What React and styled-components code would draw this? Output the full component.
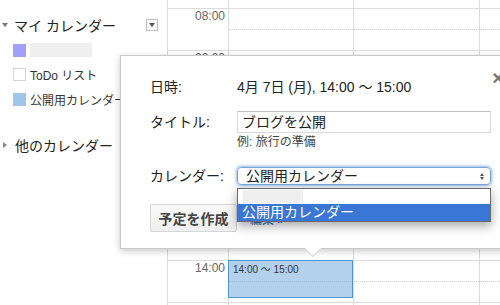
import styled, { createGlobalStyle } from "styled-components";

const GlobalStyle = createGlobalStyle`
  * { box-sizing: border-box; }
  html, body { margin: 0; padding: 0; background: #fff; overflow: hidden; }
  body {
    font-family: Arial, "Liberation Sans", "Noto Sans CJK JP", sans-serif;
    color: #222;
  }
`;

const Page = styled.div`
  position: relative;
  display: flex;
  width: 500px;
  height: 305px;
  overflow: hidden;
`;

/* ---------- sidebar ---------- */

const Sidebar = styled.aside`
  width: 167px;
  flex-shrink: 0;
  padding: 14px 9px 0 2px;
`;

const SectionHead = styled.div`
  display: flex;
  align-items: center;
  height: 22px;
  margin-top: ${(p) => p.$gap || 0}px;
  font-size: 14px;
  color: #222;
`;

const Caret = styled.span`
  width: 0;
  height: 0;
  ${(p) =>
    p.$open
      ? `border-left: 3px solid transparent;
         border-right: 3px solid transparent;
         border-top: 4px solid #777;
         margin-right: 6px;`
      : `border-top: 3px solid transparent;
         border-bottom: 3px solid transparent;
         border-left: 4px solid #888;
         margin: 0 8px 0 1px;`}
`;

const MenuButton = styled.span`
  margin-left: auto;
  width: 12px;
  height: 12px;
  border: 1px solid #bdbdbd;
  background: #fafafa;
  display: flex;
  align-items: center;
  justify-content: center;

  &::after {
    content: "";
    border-left: 3px solid transparent;
    border-right: 3px solid transparent;
    border-top: 4px solid #555;
  }
`;

const CalList = styled.ul`
  list-style: none;
  margin: 2px 0 0;
  padding: 0;
`;

const CalItem = styled.li`
  display: flex;
  align-items: center;
  height: 24.5px;
  padding-left: 11px;
  font-size: 12px;
  color: #333;
  white-space: nowrap;
`;

const Swatch = styled.span`
  width: 13px;
  height: 13px;
  margin-right: 4px;
  flex-shrink: 0;
  background: ${(p) => p.$color};
  border: ${(p) => (p.$outline ? "1px solid #d4d4d4" : "none")};
`;

const Hidden = styled.span`
  width: 62px;
  height: 14px;
  background: #efefef;
`;

/* ---------- week grid ---------- */

const Grid = styled.div`
  flex: 1;
  display: flex;
`;

const Column = styled.div`
  flex: ${(p) => (p.$w ? `0 0 ${p.$w}px` : "1")};
  border-left: 1px solid #dcdcdc;
`;

const Slot = styled.div`
  position: relative;
  height: ${(p) => (p.$partial ? 8 : 42)}px;
  border-top: ${(p) => (p.$partial ? "none" : "1px solid #dcdcdc")};

  ${(p) =>
    p.$half &&
    !p.$partial &&
    `&::after {
      content: "";
      position: absolute;
      left: 0;
      right: 0;
      top: 20px;
      border-top: 1px dotted #d0d0d0;
    }`}
`;

const TimeLabel = styled.div`
  text-align: right;
  padding-right: 3px;
  font-size: 12px;
  line-height: 14px;
  color: #666;
`;

const Event = styled.div`
  position: absolute;
  top: -1px;
  left: -1px;
  width: 125px;
  height: 38px;
  z-index: 1;
  background: rgba(128, 178, 223, 0.6);
  border: 1px solid #4f93d1;
  padding: 3px 4px;
  font-size: 10px;
  line-height: 12px;
  color: #333;
`;

/* ---------- quick-add bubble ---------- */

const Popup = styled.div`
  position: absolute;
  left: 120px;
  top: 55px;
  width: 392px;
  height: 194px;
  z-index: 3;
  background: #fff;
  border: 1px solid #c9c9c9;
  box-shadow: 0 2px 7px rgba(0, 0, 0, 0.22);
  padding: 22px 0 0 29px;

  &::before,
  &::after {
    content: "";
    position: absolute;
    width: 0;
    height: 0;
  }
  &::before {
    left: 183px;
    bottom: -9px;
    border-left: 9px solid transparent;
    border-right: 9px solid transparent;
    border-top: 9px solid #c9c9c9;
  }
  &::after {
    left: 184px;
    bottom: -8px;
    border-left: 8px solid transparent;
    border-right: 8px solid transparent;
    border-top: 8px solid #fff;
  }
`;

const Close = styled.span`
  position: absolute;
  top: 12px;
  right: 7px;
  font-size: 20px;
  line-height: 20px;
  font-weight: bold;
  color: #777;
`;

const Row = styled.div`
  display: flex;
  align-items: center;
  margin-top: ${(p) => p.$mt || 0}px;
`;

const Label = styled.div`
  width: 87px;
  flex-shrink: 0;
  font-size: 14px;
  line-height: 18px;
  color: #222;
`;

const Value = styled.div`
  font-size: 14px;
  line-height: 18px;
  color: #222;
`;

const TextBox = styled.div`
  width: 254px;
  height: 22px;
  border: 1px solid #d9d9d9;
  border-top-color: #c0c0c0;
  padding: 0 4px;
  font-size: 14px;
  line-height: 20px;
  color: #222;
`;

const Hint = styled.div`
  margin-top: 2px;
  padding-left: 87px;
  font-size: 12px;
  line-height: 14px;
  color: #444;
`;

const SelectWrap = styled.div`
  position: relative;
  width: 254px;
`;

const SelectBox = styled.div`
  display: flex;
  align-items: center;
  height: 18px;
  border: 1px solid #7aa5db;
  border-radius: 4px;
  box-shadow: 0 0 3px 1px rgba(90, 145, 220, 0.65);
  padding: 0 6px 0 8px;
  font-size: 14px;
  line-height: 16px;
  color: #222;
`;

const Spinner = styled.span`
  margin-left: auto;
  display: flex;
  flex-direction: column;
  gap: 1px;

  &::before,
  &::after {
    content: "";
    border-left: 2px solid transparent;
    border-right: 2px solid transparent;
  }
  &::before { border-bottom: 3px solid #555; }
  &::after { border-top: 3px solid #555; }
`;

const OptionList = styled.div`
  position: absolute;
  top: calc(100% + 3px);
  left: 0;
  width: 254px;
  z-index: 2;
  background: #fff;
  border: 1px solid #6a6a6a;
  box-shadow: 0 4px 10px rgba(0, 0, 0, 0.35);
`;

const Option = styled.div`
  display: flex;
  align-items: center;
  height: ${(p) => (p.$active ? 17 : 15)}px;
  padding-left: 4px;
  font-size: 14px;
  line-height: 17px;
  background: ${(p) => (p.$active ? "#3a76d6" : "#fff")};
  color: ${(p) => (p.$active ? "#fff" : "#222")};
`;

const OptionBlank = styled.span`
  width: 60px;
  height: 13px;
  margin-left: 1px;
  background: #efefef;
`;

const CreateButton = styled.button`
  width: 87px;
  height: 28px;
  padding: 0;
  border: 1px solid #d6d6d6;
  border-radius: 2px;
  background: linear-gradient(#f8f8f8, #f0f0f0);
  font-family: inherit;
  font-size: 14px;
  font-weight: bold;
  color: #444;
`;

const EditLink = styled.a`
  margin-left: 13px;
  font-size: 12px;
  color: #2a5db0;
  text-decoration: none;
`;

const HOURS = ["07:00", "08:00", "09:00", "10:00", "11:00", "12:00", "13:00", "14:00", "15:00"];
const DAYS = [125, 126, null];

export default function App() {
  return (
    <>
      <GlobalStyle />
      <Page>
        <Sidebar>
          <SectionHead>
            <Caret $open />
            マイ カレンダー
            <MenuButton />
          </SectionHead>
          <CalList>
            <CalItem>
              <Swatch $color="#a2a0f8" />
              <Hidden />
            </CalItem>
            <CalItem>
              <Swatch $color="#fff" $outline />
              ToDo リスト
            </CalItem>
            <CalItem>
              <Swatch $color="#a0c5e8" />
              公開用カレンダー
            </CalItem>
          </CalList>
          <SectionHead $gap={22}>
            <Caret />
            他のカレンダー
          </SectionHead>
        </Sidebar>

        <Grid>
          <Column $w={61}>
            {HOURS.map((h, i) => (
              <Slot key={h} $partial={i === 0}>
                {i > 0 && <TimeLabel>{h}</TimeLabel>}
              </Slot>
            ))}
          </Column>
          {DAYS.map((w, d) => (
            <Column key={d} $w={w}>
              {HOURS.map((h, i) => (
                <Slot key={h} $partial={i === 0} $half>
                  {d === 0 && h === "14:00" && <Event>14:00 〜 15:00</Event>}
                </Slot>
              ))}
            </Column>
          ))}
        </Grid>

        <Popup>
          <Close>×</Close>
          <Row>
            <Label>日時:</Label>
            <Value>4月 7日 (月), 14:00 〜 15:00</Value>
          </Row>
          <Row $mt={15}>
            <Label>タイトル:</Label>
            <TextBox>ブログを公開</TextBox>
          </Row>
          <Hint>例: 旅行の準備</Hint>
          <Row $mt={18}>
            <Label>カレンダー:</Label>
            <SelectWrap>
              <SelectBox>
                公開用カレンダー
                <Spinner />
              </SelectBox>
              <OptionList>
                <Option>
                  <OptionBlank />
                </Option>
                <Option $active>公開用カレンダー</Option>
              </OptionList>
            </SelectWrap>
          </Row>
          <Row $mt={19}>
            <CreateButton>予定を作成</CreateButton>
            <EditLink href="#">編集 »</EditLink>
          </Row>
        </Popup>
      </Page>
    </>
  );
}
